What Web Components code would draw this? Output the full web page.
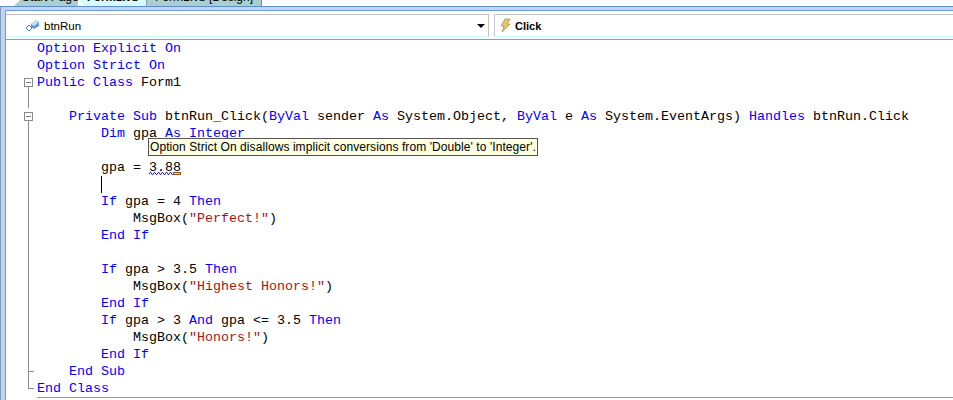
<!DOCTYPE html>
<html>
<head>
<meta charset="utf-8">
<title>Form1.vb</title>
<style>
  html, body { margin: 0; padding: 0; background: #fff; overflow: hidden; }
</style>
</head>
<body>
<vs-editor>
  <vs-tabs slot="tabs"></vs-tabs>
  <vs-navbar slot="nav"></vs-navbar>
  <vs-code slot="code"></vs-code>
</vs-editor>

<script>
class VsEditor extends HTMLElement {
  constructor() {
    super();
    this.attachShadow({ mode: "open" }).innerHTML = `
      <style>
        :host { display: block; width: 953px; height: 400px; overflow: hidden; background: #fff; }
        .frame {
          height: 394px;
          display: flex;
          flex-direction: column;
          box-sizing: border-box;
          border-top: 1px solid #5b8fd0;
          border-left: 1px solid #7f9db9;
          background: #c4d2f4;
          padding: 3px 0 0 4px;
        }
        .inner {
          flex: 1;
          min-height: 0;
          background: #fff;
          border-top: 1px solid #6a9ad8;
          border-left: 1px solid #6a9ad8;
          padding: 3px 0 0 0;
          display: flex;
          flex-direction: column;
        }
      </style>
      <slot name="tabs"></slot>
      <div class="frame"><div class="inner">
        <slot name="nav"></slot>
        <slot name="code"></slot>
      </div></div>`;
  }
}

class VsTabs extends HTMLElement {
  constructor() {
    super();
    this.attachShadow({ mode: "open" }).innerHTML = `
      <style>
        :host { display: flex; height: 6px; overflow: hidden; padding-left: 14px; font: 12px "Liberation Sans", sans-serif; color: #000; background: #fff; }
        .tab { height: 6px; flex: none; overflow: hidden; background: #a9cfd0; box-sizing: border-box; white-space: nowrap; }
        .tab span { display: block; line-height: 14px; margin-top: -10px; }
        .start { width: 64px; padding-left: 8px; clip-path: polygon(6px 0, 100% 0, 100% 100%, 0 100%); }
        .on { width: 68px; background: #d4fbff; padding-left: 9px; font-weight: bold; clip-path: polygon(0 0, 100% 0, 100% 100%, 8px 100%); font-size: 11.5px; }
        .design { width: 116px; padding-left: 8px; border-right: 1px solid #8a86a0; border-left: 1px solid #8aa0b0; }
      </style>
      <div class="tab start"><span>Start Page</span></div>
      <div class="tab on"><span>Form1.vb*</span></div>
      <div class="tab design"><span>Form1.vb [Design]</span></div>`;
  }
}

class VsNavbar extends HTMLElement {
  constructor() {
    super();
    this.attachShadow({ mode: "open" }).innerHTML = `
      <style>
        :host { display: flex; height: 26px; box-sizing: border-box; flex: none; gap: 5px; border-bottom: 1px solid #9a9a9a; font: 11.5px "Liberation Sans", sans-serif; color: #000; }
        .box { display: flex; align-items: center; box-sizing: border-box; height: 23px; border-top: 1px solid #c4c0c8; border-bottom: 1px solid #ccffff; background: #fff; }
        .left { width: 483px; border-right: 1px solid #c4c0c8; padding-left: 19px; gap: 3px; position: relative; }
        .right { flex: 1; border-left: 1px solid #c8c8e8; padding-left: 5px; gap: 4px; font-weight: bold; font-size: 11px; }
        .arrow { position: absolute; right: 3px; top: 9px; width: 0; height: 0; border: 4px solid transparent; border-top: 4px solid #000; border-bottom: 0; }
        svg { display: block; }
      </style>
      <div class="box left">
        <svg width="16" height="16" viewBox="0 0 16 16">
          <path d="M1 10l3-3 3 3-3 3z" fill="#fff" stroke="#4a7cc0"/>
          <path d="M6 6l5-4 3 2v4l-5 3-3-2z" fill="#5a9ad8"/>
          <path d="M11 2l3 2-5 4-3-2z" fill="#c4e2fa"/>
        </svg>
        <span>btnRun</span>
        <i class="arrow"></i>
      </div>
      <div class="box right">
        <svg width="11" height="15" viewBox="0 0 11 15">
          <path d="M5 1h5L7 6h3L2 14l2-6H1z" fill="#e8c860" stroke="#a08850" stroke-width=".7"/>
        </svg>
        <span>Click</span>
      </div>`;
  }
}

class VsCode extends HTMLElement {
  constructor() {
    super();
    // k = keyword, s = string, plain text otherwise
    const src = [
      ["", "<k>Option Explicit On</k>"],
      ["", "<k>Option Strict On</k>"],
      ["box", "<k>Public Class</k> Form1"],
      ["line", ""],
      ["box", "    <k>Private Sub</k> btnRun_Click(<k>ByVal</k> sender <k>As</k> System.Object, <k>ByVal</k> e <k>As</k> System.EventArgs) <k>Handles</k> btnRun.Click"],
      ["line", "        <k>Dim</k> gpa <k>As Integer</k>"],
      ["line", ""],
      ["line", '        gpa = <u>3.8</u><b>8</b>'],
      ["line", '        <i></i>'],
      ["line", "        <k>If</k> gpa = 4 <k>Then</k>"],
      ["line", '            MsgBox(<s>"Perfect!"</s>)'],
      ["line", "        <k>End If</k>"],
      ["line", ""],
      ["line", "        <k>If</k> gpa &gt; 3.5 <k>Then</k>"],
      ["line", '            MsgBox(<s>"Highest Honors!"</s>)'],
      ["line", "        <k>End If</k>"],
      ["line", "        <k>If</k> gpa &gt; 3 <k>And</k> gpa &lt;= 3.5 <k>Then</k>"],
      ["line", '            MsgBox(<s>"Honors!"</s>)'],
      ["line", "        <k>End If</k>"],
      ["tick", "    <k>End Sub</k>"],
      ["end", "<k>End Class</k>"],
    ];
    const rows = src.map(([fold, text]) =>
      `<div class="row"><div class="fold ${fold}"></div><pre>${text}</pre></div>`).join("");
    this.attachShadow({ mode: "open" }).innerHTML = `
      <style>
        :host { display: block; flex: 1; min-height: 0; position: relative; overflow: hidden; }
        .row { display: flex; height: 17px; }
        .fold { width: 13px; height: 17px; margin-left: 17px; margin-right: 1px; flex: none; position: relative; box-sizing: border-box; }
        .fold.line::before, .fold.box::after, .fold.tick::before, .fold.end::before { content: ""; position: absolute; left: 5px; top: 0; bottom: 0; border-left: 1px solid #8a8a8a; }
        .fold.box { background: linear-gradient(#808080,#808080) 3px 8px/5px 1px no-repeat; }
        .fold.box::before { content: ""; position: absolute; left: 1px; top: 4px; width: 9px; height: 9px; box-sizing: border-box; border: 1px solid #8a8a8a; }
        .fold.box::after { top: 13px; }
        .fold.tick::after, .fold.end::after { content: ""; position: absolute; left: 5px; width: 6px; top: 8px; border-top: 1px solid #8a8a8a; }
        .fold.end::before { bottom: 8px; }
        pre { margin: 0; font: 13.33px/17px "Liberation Mono", monospace; color: #000; white-space: pre; }
        k { color: #0000ff; }
        s { color: #a31515; text-decoration: none; }
        u, b { display: inline-block; height: 17px; vertical-align: top; font-weight: normal; text-decoration: none; }
        u { background: url("data:image/svg+xml,%3Csvg xmlns='http://www.w3.org/2000/svg' width='4' height='3'%3E%3Cpath d='M0 2.5L1 .5h1l1 2h1' fill='none' stroke='%232b2bd0'/%3E%3C/svg%3E") 0 13px repeat-x; background-size: 4px 3px; }
        b { position: relative; }
        b::after { content: ""; position: absolute; left: 0; right: 0; top: 13px; height: 3px; box-sizing: border-box; border: 1px solid #a05010; background: #e8c8a0; }
        i { display: inline-block; width: 1px; height: 17px; background: #000; vertical-align: top; }
        .rule { position: absolute; left: 31px; right: 0; top: 357px; border-top: 1px solid #9a9a9a; }
        .tip {
          position: absolute; left: 142px; top: 98px; height: 18px; box-sizing: border-box;
          padding: 0 1px; border: 1px solid #555; background: #ffffe1; color: #000;
          font: 12px/16px "Liberation Sans", sans-serif; white-space: nowrap; letter-spacing: .08px;
        }
      </style>
      ${rows}
      <div class="rule"></div>
      <div class="tip">Option Strict On disallows implicit conversions from 'Double' to 'Integer'.</div>`;
  }
}

customElements.define("vs-editor", VsEditor);
customElements.define("vs-tabs", VsTabs);
customElements.define("vs-navbar", VsNavbar);
customElements.define("vs-code", VsCode);
</script>
</body>
</html>
